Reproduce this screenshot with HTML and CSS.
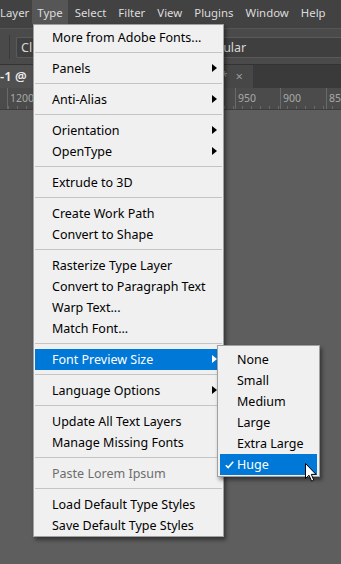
FILE: index.html
```html
<!DOCTYPE html>
<html>
<head>
<meta charset="utf-8">
<link rel="stylesheet" href="styles.css">
</head>
<body>
<div class="app">
  <div class="menubar">
    <span class="mb-item mb-first">Layer</span>
    <span class="mb-item mb-active">Type</span>
    <span class="mb-item">Select</span>
    <span class="mb-item">Filter</span>
    <span class="mb-item">View</span>
    <span class="mb-item">Plugins</span>
    <span class="mb-item">Window</span>
    <span class="mb-item">Help</span>
  </div>
  <div class="optbar">
    <div class="opt-sep"></div>
    <div class="fontbox"><span class="fb-a">Cl</span><span class="fb-b">ular</span></div>
  </div>
  <div class="tabbar">
    <div class="tab tab-active">-1 @</div>
    <div class="tab tab-second"><span class="tab-star">*</span><span class="tab-x">×</span></div>
  </div>
  <div class="ruler">
    <span class="rl rl-1200">1200</span>
    <span class="rl rl-950">950</span>
    <span class="rl rl-900">900</span>
    <span class="rl rl-850">85</span>
  </div>
  <div class="canvas"></div>

  <div class="menu">
    <div class="mi">More from Adobe Fonts...</div>
    <div class="sep"></div>
    <div class="mi sub">Panels</div>
    <div class="sep"></div>
    <div class="mi sub">Anti-Alias</div>
    <div class="sep"></div>
    <div class="mi sub">Orientation</div>
    <div class="mi sub">OpenType</div>
    <div class="sep"></div>
    <div class="mi">Extrude to 3D</div>
    <div class="sep"></div>
    <div class="mi">Create Work Path</div>
    <div class="mi">Convert to Shape</div>
    <div class="sep"></div>
    <div class="mi">Rasterize Type Layer</div>
    <div class="mi">Convert to Paragraph Text</div>
    <div class="mi">Warp Text...</div>
    <div class="mi">Match Font...</div>
    <div class="sep"></div>
    <div class="mi sub hl">Font Preview Size</div>
    <div class="sep"></div>
    <div class="mi sub">Language Options</div>
    <div class="sep"></div>
    <div class="mi">Update All Text Layers</div>
    <div class="mi">Manage Missing Fonts</div>
    <div class="sep"></div>
    <div class="mi dis">Paste Lorem Ipsum</div>
    <div class="sep"></div>
    <div class="mi">Load Default Type Styles</div>
    <div class="mi">Save Default Type Styles</div>
  </div>

  <div class="submenu">
    <div class="mi">None</div>
    <div class="mi">Small</div>
    <div class="mi">Medium</div>
    <div class="mi">Large</div>
    <div class="mi">Extra Large</div>
    <div class="mi hl"><svg class="check" width="9" height="8" viewBox="0 0 9 8"><path d="M0.8 4.2 L3.2 6.6 L8.2 0.8" fill="none" stroke="#fff" stroke-width="1.6"/></svg>Huge</div>
  </div>

  <svg class="cursor" width="14" height="21" viewBox="0 0 14 21">
    <path d="M1.5 1.5 L1.5 16.5 L5 13.2 L7.6 19.2 L9.8 18.2 L7.3 12.4 L12 12.4 Z" fill="#fff" stroke="#000" stroke-width="1" stroke-linejoin="miter"/>
  </svg>
</div>
</body>
</html>
```

FILE: styles.css
```css
html, body {
  margin: 0;
  padding: 0;
}
body {
  width: 341px;
  height: 564px;
  overflow: hidden;
  background: #5e5e5e;
  font-family: "Noto Sans", "Open Sans", sans-serif;
}
.app {
  position: relative;
  width: 341px;
  height: 564px;
  display: flex;
  flex-direction: column;
  overflow: hidden;
}
.menubar {
  height: 24px;
  padding-bottom: 4px;
  background: #424242;
  display: flex;
  align-items: flex-start;
  font-size: 11.4px;
  color: #dcdcdc;
  white-space: nowrap;
  overflow: hidden;
}
.mb-item {
  height: 24px;
  line-height: 25px;
  padding: 0 6px;
}
.mb-first {
  margin-left: -6px;
  padding-right: 3px;
}
.mb-active {
  background: #565656;
  padding: 0 5px;
  margin: 0 1px 0 0;
}
.optbar {
  height: 35px;
  background: #4a4a4a;
  border-top: 1px solid #565656;
  display: flex;
  align-items: center;
}
.opt-sep {
  width: 1px;
  height: 24px;
  background: #3a3a3a;
  margin-left: 9px;
  margin-right: 6px;
}
.fontbox {
  flex: 1;
  height: 19px;
  margin-top: 2px;
  background: #3f3f3f;
  border: 1px solid #5a5a5a;
  border-right: none;
  border-radius: 2px 0 0 2px;
  display: flex;
  align-items: center;
  font-size: 12.5px;
  color: #d8d8d8;
}
.fb-a {
  margin-left: 4px;
}
.fb-b {
  margin-left: 191px;
}
.tabbar {
  height: 23px;
  background: #3a3a3a;
  border-top: 1px solid #333;
  display: flex;
}
.tab {
  height: 23px;
  line-height: 23px;
  font-size: 13px;
  color: #ececec;
  white-space: nowrap;
}
.tab-active {
  width: 33px;
  background: #505050;
  font-weight: 600;
  overflow: hidden;
}
.tab-second {
  width: 219px;
  background: #474747;
  border-left: 1px solid #3a3a3a;
  display: flex;
  justify-content: flex-end;
  color: #9a9a9a;
}
.tab-star {
  margin-right: 8px;
  font-size: 12px;
}
.tab-x {
  margin-right: 10px;
  font-size: 13px;
}
.ruler {
  position: relative;
  height: 21px;
  border-bottom: 1px solid #3e3e3e;
  font-size: 10.5px;
  color: #a8a8a8;
  background-image:
    repeating-linear-gradient(to right, transparent 0, transparent 8px, #6a6a6a 8px, #6a6a6a 9px);
  background-size: 100% 3px;
  background-position: 0 100%;
  background-repeat: no-repeat;
  background-color: #4b4b4b;
}
.rl {
  position: absolute;
  top: 0;
  height: 21px;
  line-height: 20px;
  padding-left: 2px;
  border-left: 1px solid #6a6a6a;
  white-space: nowrap;
}
.rl-1200 { left: 7px; }
.rl-950 { left: 235px; }
.rl-900 { left: 280px; }
.rl-850 { left: 326px; }
.canvas {
  flex: 1;
  background: #5e5e5e;
}

.menu {
  position: absolute;
  left: 33px;
  top: 24px;
  width: 187px;
  padding: 2px 1px 0 1px;
  background: #f0f0f0;
  border: 1px solid #a0a0a0;
  box-shadow: 2px 3px 4px rgba(0, 0, 0, 0.45);
  font-size: 12.5px;
  color: #000;
}
.mi {
  position: relative;
  height: 21px;
  line-height: 21px;
  padding-left: 17px;
  white-space: nowrap;
}
.mi.sub::after {
  content: "";
  position: absolute;
  right: 5px;
  top: 6px;
  border-left: 5px solid #000;
  border-top: 4.5px solid transparent;
  border-bottom: 4.5px solid transparent;
}
.mi.hl {
  background: #0078d7;
  color: #fff;
}
.mi.hl.sub::after {
  border-left-color: #fff;
}
.mi.dis {
  color: #6d6d6d;
}
.sep {
  height: 10px;
  position: relative;
}
.sep::before {
  content: "";
  position: absolute;
  left: 0;
  right: 0;
  top: 4px;
  height: 1px;
  background: #c4c4c4;
}

.submenu {
  position: absolute;
  left: 217px;
  top: 345px;
  width: 97px;
  padding: 3px 2px 1px 2px;
  background: #f0f0f0;
  border: 1px solid #a0a0a0;
  box-shadow: 2px 3px 4px rgba(0, 0, 0, 0.45);
  font-size: 12.5px;
  color: #000;
}
.check {
  position: absolute;
  left: 5px;
  top: 7px;
}
.cursor {
  position: absolute;
  left: 304px;
  top: 462px;
}
```
